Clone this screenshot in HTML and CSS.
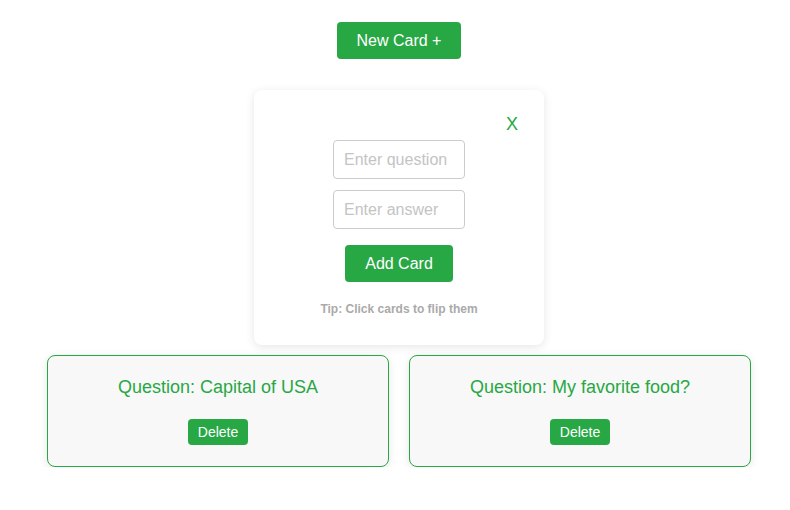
FILE: index.html
```html
<!DOCTYPE html>
<html>
<head>
<meta charset="utf-8">
<link rel="stylesheet" href="styles.css">
</head>
<body>
<div class="app">
  <button class="btn btn-new">New Card +</button>
  <div class="modal">
    <div class="modal-head"><button class="close">X</button></div>
    <input class="field" type="text" placeholder="Enter question">
    <input class="field field-second" type="text" placeholder="Enter answer">
    <button class="btn btn-add">Add Card</button>
    <p class="tip">Tip: Click cards to flip them</p>
  </div>
  <div class="cards">
    <div class="card">
      <div class="card-text">Question: Capital of USA</div>
      <button class="btn btn-delete">Delete</button>
    </div>
    <div class="card">
      <div class="card-text">Question: My favorite food?</div>
      <button class="btn btn-delete">Delete</button>
    </div>
  </div>
</div>
</body>
</html>
```

FILE: styles.css
```css
* { box-sizing: border-box; }
html, body { margin: 0; background: #ffffff; }
body {
  font-family: "Liberation Sans", Arial, sans-serif;
  padding: 22px 0 0 8px;
}
.app {
  display: flex;
  flex-direction: column;
  align-items: center;
}
.btn {
  font-family: "Liberation Sans", Arial, sans-serif;
  background: #28a745;
  color: #ffffff;
  border: none;
  border-radius: 4px;
  cursor: pointer;
  white-space: nowrap;
}
.btn-new {
  font-size: 16px;
  line-height: 19px;
  padding: 9px 0;
  width: 124px;
  height: 37px;
}
.modal {
  margin-top: 31px;
  width: 290px;
  background: #ffffff;
  border-radius: 8px;
  box-shadow: 0 2px 10px rgba(0,0,0,0.1);
  padding: 20px 20px 29px;
  display: flex;
  flex-direction: column;
  align-items: center;
}
.modal-head {
  width: 100%;
  height: 30px;
  display: flex;
  justify-content: flex-end;
  align-items: center;
}
.close {
  background: none;
  border: none;
  color: #28a745;
  font-family: "Liberation Sans", Arial, sans-serif;
  font-size: 18px;
  line-height: 20px;
  padding: 0;
  margin-right: 6px;
  margin-bottom: 2px;
}
.field {
  width: 132px;
  height: 39px;
  font-family: "Liberation Sans", Arial, sans-serif;
  font-size: 16px;
  padding: 8px 10px;
  border: 1px solid #cccccc;
  border-radius: 4px;
  color: #333;
}
.field::placeholder { color: #c4c4c4; }
.field-second { margin-top: 11px; }
.btn-add {
  margin-top: 16px;
  font-size: 16px;
  line-height: 19px;
  padding: 9px 0;
  width: 108px;
  height: 37px;
}
.tip {
  margin: 20px 0 0;
  font-size: 12px;
  line-height: 14px;
  font-weight: bold;
  color: #aaaaaa;
}
.cards {
  margin-top: 10px;
  width: 100%;
  padding: 0 39px;
  display: grid;
  grid-template-columns: 1fr 1fr;
  gap: 20px;
}
.card {
  background: #f8f8f8;
  border: 1px solid #28a745;
  border-radius: 8px;
  box-shadow: 0 2px 8px rgba(0,0,0,0.1);
  padding: 21px 10px 21px;
  height: 112px;
  display: flex;
  flex-direction: column;
  align-items: center;
}
.card-text {
  font-size: 18px;
  line-height: 21px;
  color: #28a745;
}
.btn-delete {
  margin-top: 21px;
  font-size: 14px;
  line-height: 17px;
  padding: 4px 10px;
  height: 26px;
}
```
